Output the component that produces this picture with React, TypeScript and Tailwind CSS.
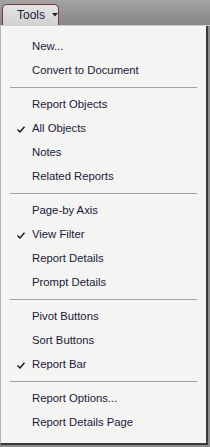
import { Fragment } from "react";

type Item = { label: string; checked?: boolean };

const groups: Item[][] = [
  [{ label: "New..." }, { label: "Convert to Document" }],
  [
    { label: "Report Objects" },
    { label: "All Objects", checked: true },
    { label: "Notes" },
    { label: "Related Reports" },
  ],
  [
    { label: "Page-by Axis" },
    { label: "View Filter", checked: true },
    { label: "Report Details" },
    { label: "Prompt Details" },
  ],
  [
    { label: "Pivot Buttons" },
    { label: "Sort Buttons" },
    { label: "Report Bar", checked: true },
  ],
  [{ label: "Report Options..." }, { label: "Report Details Page" }],
];

function Check() {
  return (
    <svg width="8" height="7" viewBox="0 0 8 7" className="absolute left-[16px] top-[10px]">
      <path d="M0.5 3.5 L3 6 L7.5 0.8" fill="none" stroke="#111" strokeWidth="1.4" />
    </svg>
  );
}

export default function App() {
  return (
    <div
      className="w-[210px] h-[447px] bg-[#8c8c8c] overflow-hidden text-[11.3px]"
      style={{ fontFamily: "Tahoma, 'Liberation Sans', sans-serif" }}
    >
      {/* top bar */}
      <div className="h-[25px] bg-gradient-to-b from-[#a3a3a3] to-[#868686] flex items-end pl-[2px]">
        <div className="h-[21px] w-[57px] rounded-t-[5px] border border-b-0 border-[#7a3a3a] bg-gradient-to-b from-[#e4e4e4] to-[#d2d2d2] flex items-center pl-[14px] gap-[7px] text-[#1c1c3c]">
          <span className="text-[12px]">Tools</span>
          <svg width="6" height="4" viewBox="0 0 6 4">
            <path d="M0 0 H6 L3 3.5 Z" fill="#222" />
          </svg>
        </div>
      </div>
      <div className="h-px bg-[#cfcfcf]" />

      {/* menu */}
      <div className="h-[419px] w-[208px] bg-[#f4f4f2] border-l border-[#b4b4b4] border-r-2 border-r-[#3a3a3a] border-b-2 border-b-[#3a3a3a] pt-[8px]">
        {groups.map((group, gi) => (
          <Fragment key={gi}>
            {gi > 0 && (
              <div className="h-[10px] flex items-center px-[9px]">
                <div className="h-px w-full bg-[#a0a0a0]" />
              </div>
            )}
            {group.map((item) => (
              <div key={item.label} className="relative h-[24px] flex items-center pl-[31px] text-[#1a1a3a]">
                {item.checked && <Check />}
                {item.label}
              </div>
            ))}
          </Fragment>
        ))}
      </div>
    </div>
  );
}
